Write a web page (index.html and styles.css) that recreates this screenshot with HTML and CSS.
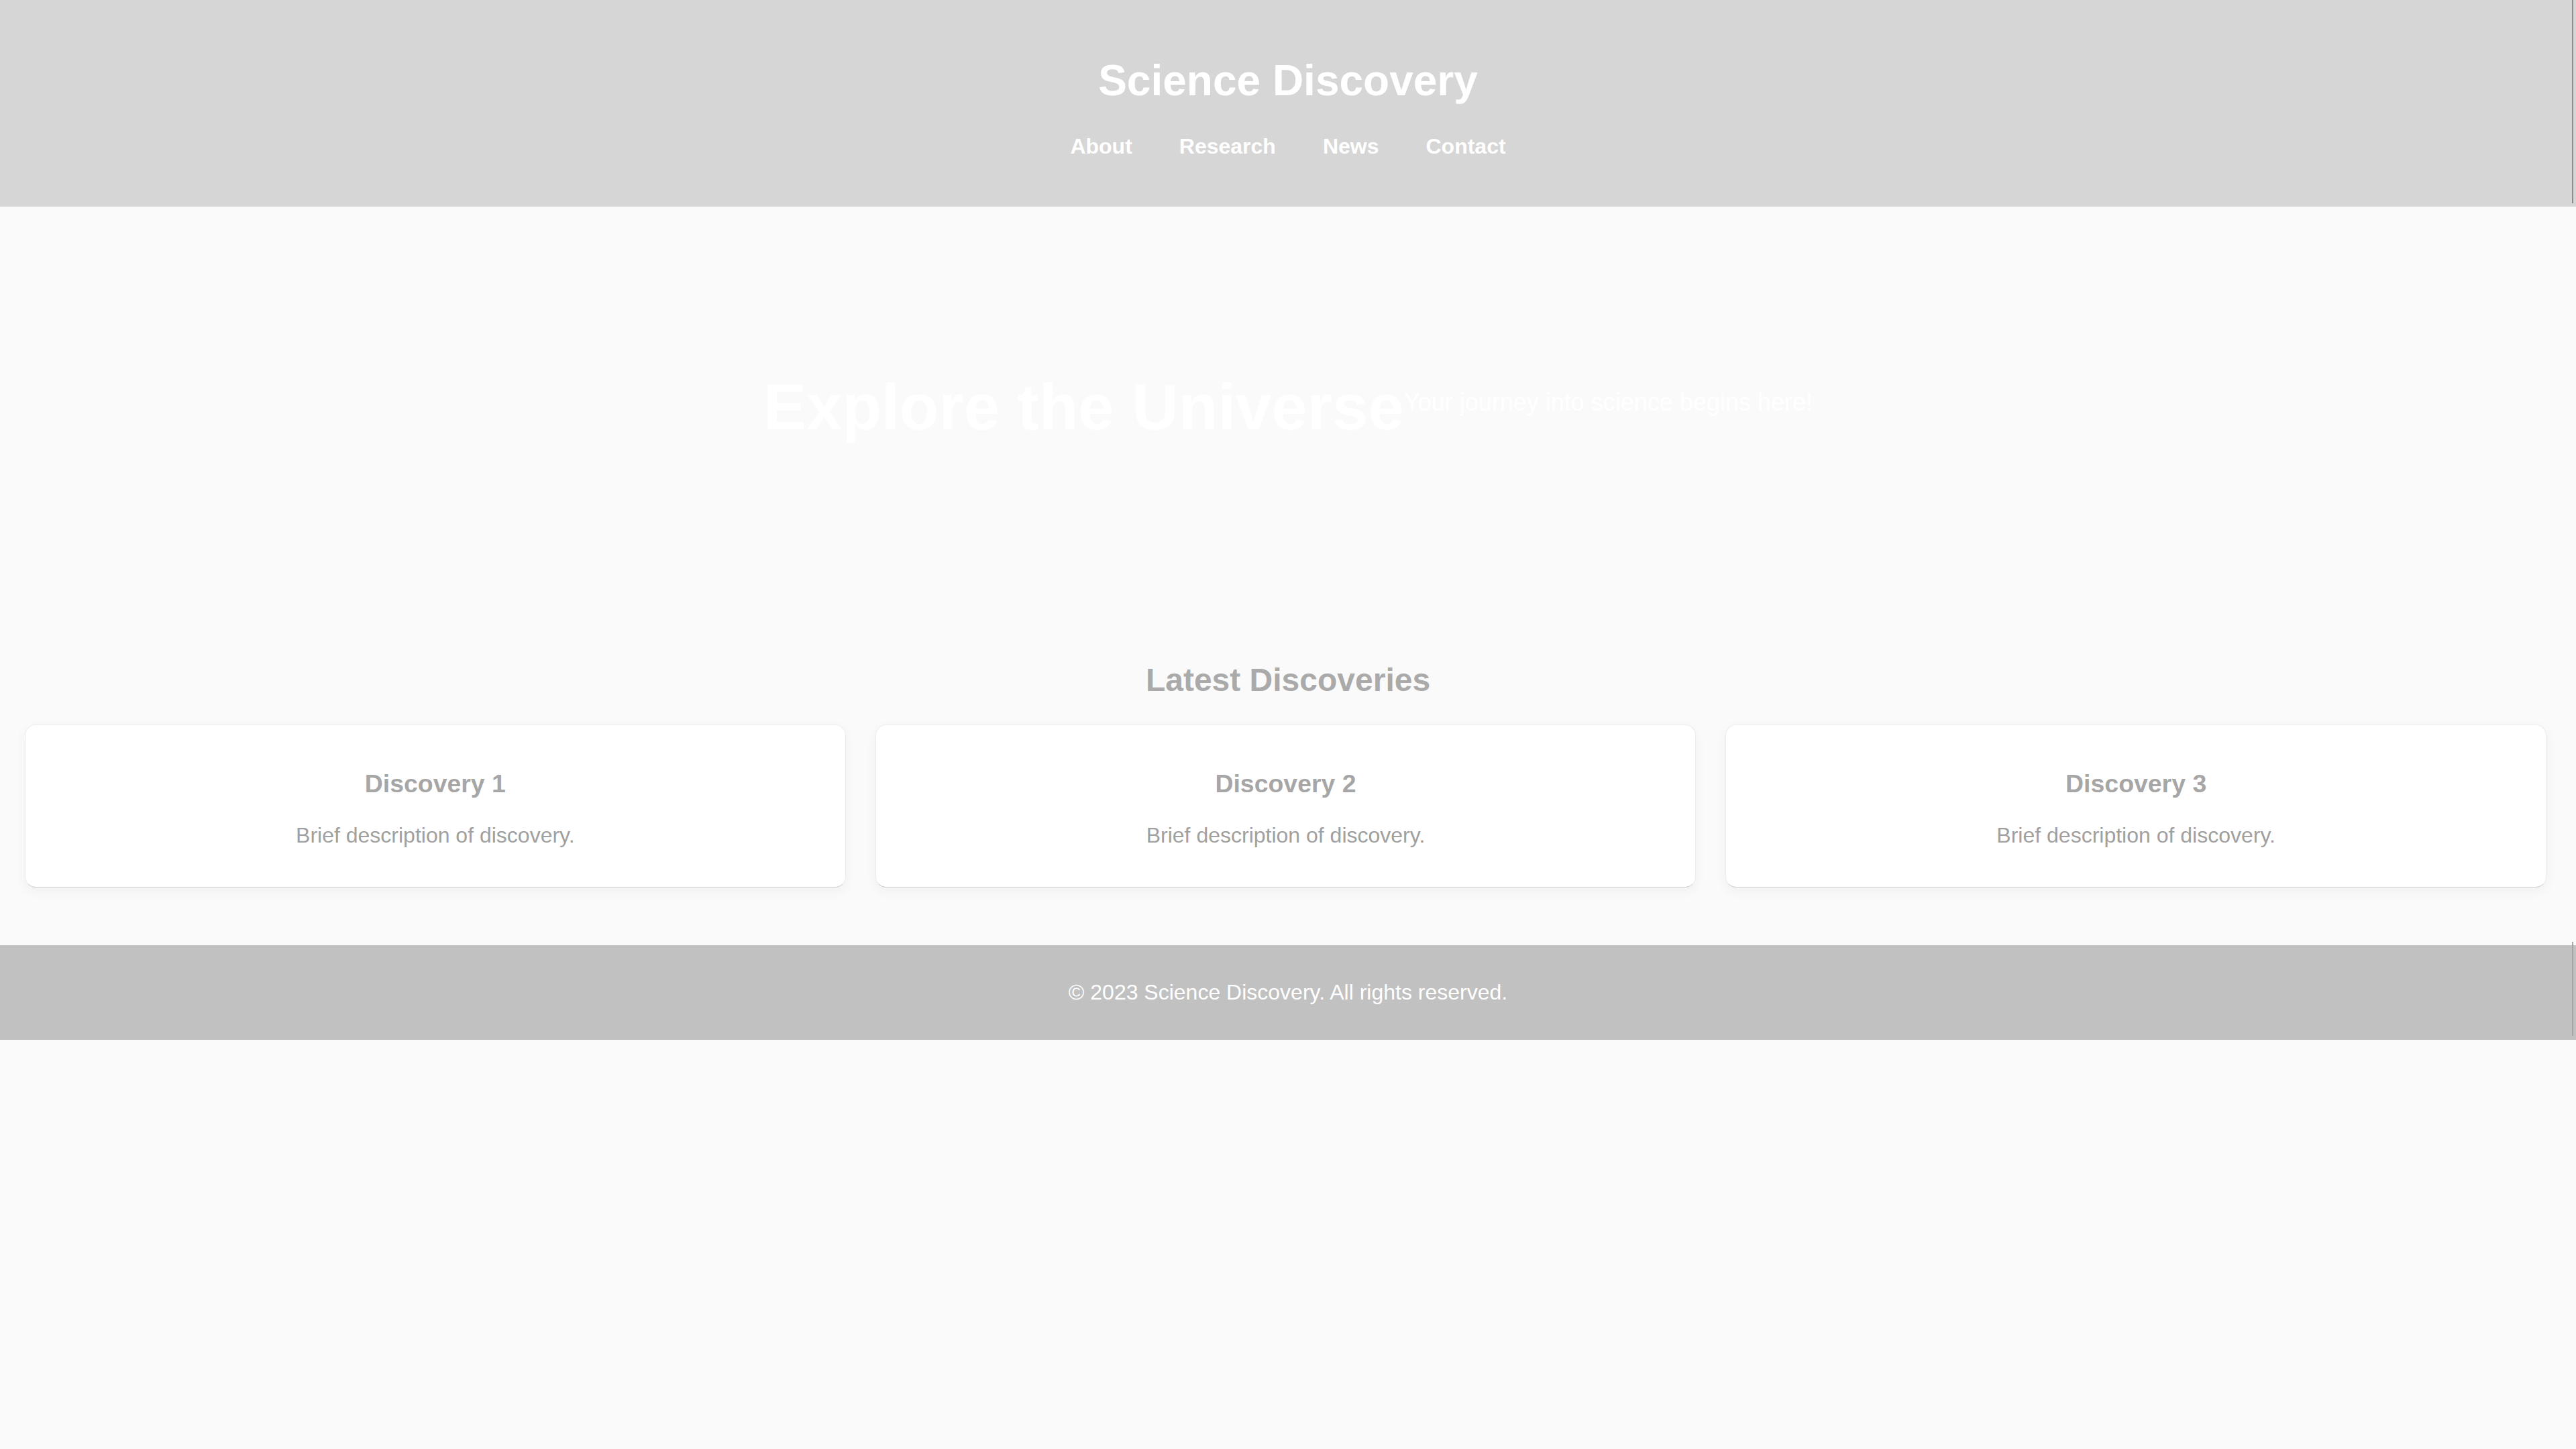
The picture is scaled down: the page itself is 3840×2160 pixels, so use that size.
FILE: index.html
```html
<!DOCTYPE html>
<html lang="en">
<head>
<meta charset="utf-8">
<title>Science Discovery</title>
<link rel="stylesheet" href="styles.css">
</head>
<body>
<header class="site-header">
  <h1 class="site-title">Science Discovery</h1>
  <nav class="site-nav">
    <a class="nav-link" href="#">About</a>
    <a class="nav-link" href="#">Research</a>
    <a class="nav-link" href="#">News</a>
    <a class="nav-link" href="#">Contact</a>
  </nav>
</header>
<section class="hero">
  <h2 class="hero-title">Explore the Universe</h2>
  <p class="hero-sub">Your journey into science begins here!</p>
</section>
<section class="discoveries">
  <h2 class="section-title">Latest Discoveries</h2>
  <div class="card-grid">
    <article class="card">
      <h3 class="card-title">Discovery 1</h3>
      <p class="card-text">Brief description of discovery.</p>
    </article>
    <article class="card">
      <h3 class="card-title">Discovery 2</h3>
      <p class="card-text">Brief description of discovery.</p>
    </article>
    <article class="card">
      <h3 class="card-title">Discovery 3</h3>
      <p class="card-text">Brief description of discovery.</p>
    </article>
  </div>
</section>
<footer class="site-footer">
  <p class="footer-text">© 2023 Science Discovery. All rights reserved.</p>
</footer>
</body>
</html>
```
FILE: styles.css
```css
html, body {
  margin: 0;
  padding: 0;
}
body {
  background: #fafafa;
  font-family: "Liberation Sans", Arial, sans-serif;
  font-size: 32px;
  line-height: normal;
  color: #999;
}

.site-header {
  position: relative;
  background: #d6d6d6;
  padding: 40px 0;
  text-align: center;
}
.site-header::after {
  content: "";
  position: absolute;
  top: 0;
  bottom: 5px;
  right: 4px;
  width: 2px;
  background: #8c8c8c;
}
.site-title {
  margin: 42.88px 0;
  font-size: 64px;
  font-weight: bold;
  color: #ffffff;
}
.site-nav {
  display: flex;
  justify-content: center;
  gap: 70px;
  margin-bottom: 31px;
}
.nav-link {
  color: #ffffff;
  font-weight: bold;
  font-size: 32px;
  text-decoration: none;
}

.hero {
  display: flex;
  justify-content: center;
  align-items: center;
  padding: 244px 0;
}
.hero-title {
  margin: 0;
  font-size: 96px;
  font-weight: bold;
  color: #ffffff;
}
.hero-sub {
  margin: 0 0 14px;
  font-size: 36px;
  color: #ffffff;
}

.discoveries {
  padding: 40px 0 86px;
  text-align: center;
}
.section-title {
  margin: 39.84px 0;
  font-size: 48px;
  font-weight: bold;
  color: #aaaaaa;
}
.card-grid {
  display: grid;
  grid-template-columns: repeat(3, 1fr);
  gap: 44px;
  margin: 0 44px 0 37px;
}
.card {
  background: #ffffff;
  border: 1px solid #ececec;
  border-bottom-color: #cfcfcf;
  border-radius: 16px;
  padding: 28px 30px 26px;
  box-shadow: 0 6px 18px rgba(0, 0, 0, 0.045);
}
.card-title {
  margin: 37.44px 0;
  font-size: 37.44px;
  font-weight: bold;
  color: #a6a6a6;
}
.card-text {
  margin: 32px 0;
  font-size: 32px;
  color: #a0a0a0;
}

.site-footer {
  position: relative;
  background: #c1c1c1;
  padding: 52px 0;
  text-align: center;
}
.site-footer::after {
  content: "";
  position: absolute;
  top: -5px;
  bottom: 6px;
  right: 4px;
  width: 2px;
  background: #a6a6a6;
}
.footer-text {
  margin: 0;
  font-size: 32px;
  color: #ffffff;
}
```
